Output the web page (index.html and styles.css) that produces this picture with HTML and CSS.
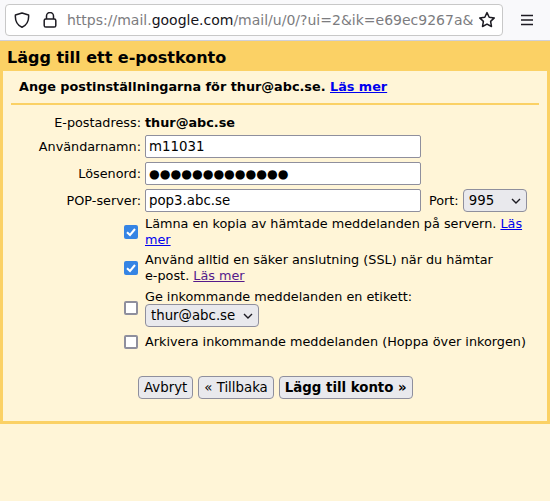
FILE: index.html
```html
<!DOCTYPE html>
<html lang="sv">
<head>
<meta charset="utf-8">
<title>Lägg till ett e-postkonto</title>
<link rel="stylesheet" href="styles.css">
</head>
<body>
<header class="toolbar">
  <div class="urlbar">
    <svg class="icon shield" width="16" height="16" viewBox="0 0 16 16"><path d="M8 1 L14.6 3 C15 8.5 13 13 8 15.2 C3 13 1 8.5 1.4 3 Z" fill="none" stroke="#1c1b22" stroke-width="1.5" stroke-linejoin="round"/></svg>
    <svg class="icon lock" width="14" height="16" viewBox="0 0 14 16"><path d="M3.5 7 V4 a3.5 3.5 0 0 1 7 0 V7" fill="none" stroke="#1c1b22" stroke-width="1.5"/><rect x="1.2" y="7" width="11.6" height="8" rx="1.6" fill="none" stroke="#1c1b22" stroke-width="1.5"/></svg>
    <div class="url"><span class="dim">https://mail.</span>google.com<span class="dim">/mail/u/0/?ui=2&amp;ik=e69ec9267a&amp;</span></div>
    <svg class="icon star" width="18" height="18" viewBox="0 0 18 18"><path d="M9 1.6 L11.2 6.2 L16.3 6.9 L12.6 10.4 L13.5 15.5 L9 13.1 L4.5 15.5 L5.4 10.4 L1.7 6.9 L6.8 6.2 Z" fill="none" stroke="#1c1b22" stroke-width="1.5" stroke-linejoin="round"/></svg>
  </div>
  <svg class="menu" width="14" height="12" viewBox="0 0 14 12"><path d="M1 1.5 H13 M1 6 H13 M1 10.5 H13" stroke="#1c1b22" stroke-width="1.4"/></svg>
</header>
<main class="frame">
  <h1 class="title">Lägg till ett e-postkonto</h1>
  <div class="panel">
    <p class="intro">Ange postinställningarna för thur@abc.se. <a href="#a">Läs mer</a></p>
    <hr class="rule">
    <form class="form">
      <div class="row row-email">
        <span class="label">E-postadress:</span>
        <strong class="email">thur@abc.se</strong>
      </div>
      <div class="row">
        <label class="label">Användarnamn:</label>
        <input class="field" type="text" value="m11031">
      </div>
      <div class="row">
        <label class="label">Lösenord:</label>
        <input class="field field-secret" type="text" value="●●●●●●●●●●●●●">
      </div>
      <div class="row">
        <label class="label">POP-server:</label>
        <input class="field" type="text" value="pop3.abc.se">
        <label class="port-label">Port:</label>
        <span class="select select-port">995<svg class="chev" width="10" height="6" viewBox="0 0 10 6"><path d="M1 1 L5 5 L9 1" fill="none" stroke="#1c1b22" stroke-width="1.4"/></svg></span>
      </div>
      <div class="check c1">
        <input class="box" type="checkbox" checked>
        <div class="check-text">Lämna en kopia av hämtade meddelanden på servern. <a href="#a">Läs mer</a></div>
      </div>
      <div class="check c2">
        <input class="box" type="checkbox" checked>
        <div class="check-text">Använd alltid en säker anslutning (SSL) när du hämtar e&#8209;post. <a class="visited" href="#b">Läs mer</a></div>
      </div>
      <div class="check c3">
        <input class="box" type="checkbox">
        <div class="check-text">Ge inkommande meddelanden en etikett:<br>
          <span class="select select-tag">thur@abc.se<svg class="chev" width="10" height="6" viewBox="0 0 10 6"><path d="M1 1 L5 5 L9 1" fill="none" stroke="#1c1b22" stroke-width="1.4"/></svg></span>
        </div>
      </div>
      <div class="check c4">
        <input class="box" type="checkbox">
        <div class="check-text">Arkivera inkommande meddelanden (Hoppa över inkorgen)</div>
      </div>
      <div class="actions">
        <button class="btn" type="button">Avbryt</button>
        <button class="btn" type="button">« Tillbaka</button>
        <button class="btn btn-main" type="button">Lägg till konto »</button>
      </div>
    </form>
  </div>
</main>
</body>
</html>
```

FILE: styles.css
```css
* { box-sizing: border-box; }
html, body { margin: 0; padding: 0; }
body {
  background: #fff5d7;
  font-family: "DejaVu Sans", sans-serif;
  font-size: 12.8px;
  line-height: 15px;
  color: #000;
  height: 501px;
  overflow: hidden;
}
.toolbar {
  height: 41px;
  background: #f9f9fb;
  border-bottom: 1px solid #cfcfd8;
  display: flex;
  align-items: flex-start;
  padding: 4px 0 0 5px;
}
.urlbar {
  width: 498px;
  height: 32px;
  background: #fff;
  border: 1px solid #c8c8c8;
  border-radius: 4px;
  display: flex;
  align-items: center;
  padding-left: 8px;
}
.shield { flex: none; }
.lock { flex: none; margin-left: 13px; }
.url {
  flex: none;
  width: 407px;
  margin-left: 10px;
  font-size: 14px;
  white-space: nowrap;
  overflow: hidden;
  color: #15141a;
}
.dim { color: #7c7c80; }
.star { flex: none; margin-left: 4px; }
.menu { margin: 10px 0 0 17px; flex: none; }
.frame {
  background: #fbd165;
  padding: 0 3px 3px;
}
.title {
  margin: 0;
  font-size: 16px;
  line-height: 19px;
  padding: 7px 0 4px 4px;
  font-weight: bold;
}
.panel {
  background: #fff5d7;
  height: 350px;
  padding: 0 8px;
}
.intro {
  margin: 0;
  padding: 8px 0 0 8px;
  font-weight: bold;
  height: 32px;
}
a { color: #0000ee; }
a.visited { color: #551a8b; }
.rule {
  margin: 0;
  border: 0;
  height: 2px;
  background: #fbd165;
}
.form { display: block; padding-top: 10px; }
.row {
  display: flex;
  align-items: center;
  height: 23px;
  margin-bottom: 4px;
}
.row-email { height: 15px; margin-bottom: 5px; }
.label {
  flex: none;
  width: 130px;
  text-align: right;
}
.email { margin-left: 4px; font-weight: bold; }
.field {
  margin-left: 4px;
  width: 276px;
  height: 23px;
  border: 1px solid #8f8f9d;
  border-radius: 2px;
  background: #fff;
  padding: 0 4px 0 3px;
  font: 13.333px "DejaVu Sans", sans-serif;
  color: #000;
}
.field-secret { font-size: 12.3px; }
.port-label { margin-left: 8px; }
.select {
  display: inline-flex;
  align-items: center;
  justify-content: space-between;
  height: 23px;
  background: #e9e9ed;
  border: 1px solid #8f8f9d;
  border-radius: 4px;
  font-size: 13.333px;
  padding: 0 5px;
}
.select-port { width: 64px; margin-left: 4px; }
.select-tag { width: 114px; margin-top: 0; vertical-align: top; }
.chev { flex: none; margin-left: 4px; }
.check { display: flex; margin-left: 113px; }
.box {
  appearance: none;
  flex: none;
  width: 14px;
  height: 14px;
  margin: 0 7px 0 0;
  border: 2px solid #8f8f9d;
  border-radius: 2px;
  background: #fff;
  align-self: center;
}
.box:checked {
  border: 0;
  background: #3584e4 url("data:image/svg+xml,%3Csvg xmlns='http://www.w3.org/2000/svg' viewBox='0 0 14 14'%3E%3Cpath d='M3 7.2 L6 10 L11 4' fill='none' stroke='white' stroke-width='2'/%3E%3C/svg%3E") center/14px no-repeat;
}
.check-text { width: 385px; }
.c1 { margin-top: 4px; line-height: 16px; }
.c2 { margin-top: 4px; line-height: 16px; }
.c3 { margin-top: 5px; }
.c4 { margin-top: 7px; }
.actions {
  display: flex;
  gap: 5px;
  margin: 27px 0 0 127px;
}
.btn {
  height: 23px;
  padding: 0 5px;
  background: #e9e9ed;
  border: 1px solid #8f8f9d;
  border-radius: 4px;
  font: 13.333px "DejaVu Sans", sans-serif;
  color: #000;
}
.btn-main { font-weight: bold; }
```
